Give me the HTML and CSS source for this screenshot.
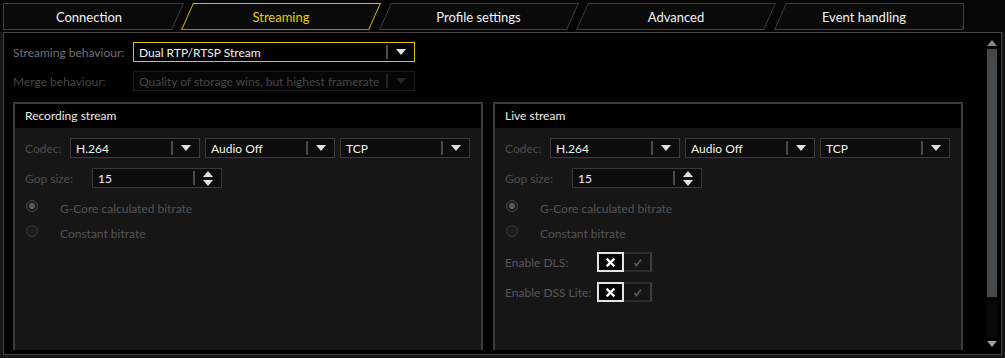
FILE: index.html
```html
<!DOCTYPE html>
<html lang="en">
<head>
  <meta charset="UTF-8" />
  <title>Camera settings - Streaming</title>
  <link rel="stylesheet" href="styles.css">
</head>
<body>
  <div class="topbar">
    <nav class="tabs">
      <div class="tab tab-first">Connection</div>
      <div class="tab active">Streaming</div>
      <div class="tab">Profile settings</div>
      <div class="tab">Advanced</div>
      <div class="tab tab-last">Event handling</div>
    </nav>
  </div>

  <div class="frame">
    <div class="scroll-view">
      <div class="field">
        <label class="field-label">Streaming behaviour:</label>
        <div class="combo combo-wide focused">
          <span class="combo-value">Dual RTP/RTSP Stream</span>
          <span class="combo-sep"></span>
          <span class="combo-btn"><i class="tri-down"></i></span>
        </div>
      </div>
      <div class="field field-last disabled">
        <label class="field-label">Merge behaviour:</label>
        <div class="combo combo-wide">
          <span class="combo-value">Quality of storage wins, but highest framerate</span>
          <span class="combo-sep"></span>
          <span class="combo-btn"><i class="tri-down"></i></span>
        </div>
      </div>

      <div class="groups">
        <section class="group">
          <header class="group-title">Recording stream</header>
          <div class="group-body">
            <div class="row">
              <span class="row-label codec-label">Codec:</span>
              <div class="combo"><span class="combo-value">H.264</span><span class="combo-sep"></span><span class="combo-btn"><i class="tri-down"></i></span></div>
              <div class="combo"><span class="combo-value">Audio Off</span><span class="combo-sep"></span><span class="combo-btn"><i class="tri-down"></i></span></div>
              <div class="combo"><span class="combo-value">TCP</span><span class="combo-sep"></span><span class="combo-btn"><i class="tri-down"></i></span></div>
            </div>
            <div class="row">
              <span class="row-label gop-label">Gop size:</span>
              <div class="spin"><span class="combo-value">15</span><span class="combo-sep"></span><span class="spin-btn"><i class="tri-up"></i><i class="tri-down"></i></span></div>
            </div>
            <div class="radio-row">
              <span class="radio checked"></span><span class="radio-text">G-Core calculated bitrate</span>
            </div>
            <div class="radio-row">
              <span class="radio"></span><span class="radio-text">Constant bitrate</span>
            </div>
          </div>
        </section>

        <section class="group">
          <header class="group-title">Live stream</header>
          <div class="group-body">
            <div class="row">
              <span class="row-label codec-label">Codec:</span>
              <div class="combo"><span class="combo-value">H.264</span><span class="combo-sep"></span><span class="combo-btn"><i class="tri-down"></i></span></div>
              <div class="combo"><span class="combo-value">Audio Off</span><span class="combo-sep"></span><span class="combo-btn"><i class="tri-down"></i></span></div>
              <div class="combo"><span class="combo-value">TCP</span><span class="combo-sep"></span><span class="combo-btn"><i class="tri-down"></i></span></div>
            </div>
            <div class="row">
              <span class="row-label gop-label">Gop size:</span>
              <div class="spin"><span class="combo-value">15</span><span class="combo-sep"></span><span class="spin-btn"><i class="tri-up"></i><i class="tri-down"></i></span></div>
            </div>
            <div class="radio-row">
              <span class="radio checked"></span><span class="radio-text">G-Core calculated bitrate</span>
            </div>
            <div class="radio-row">
              <span class="radio"></span><span class="radio-text">Constant bitrate</span>
            </div>
            <div class="row toggle-row toggle-first">
              <span class="row-label toggle-label">Enable DLS:</span>
              <div class="toggle">
                <span class="toggle-off"><svg width="9" height="9" viewBox="0 0 9 9"><path d="M1.5 1.5 L7.5 7.5 M7.5 1.5 L1.5 7.5" stroke="#fff" stroke-width="2.4" stroke-linecap="square"/></svg></span>
                <span class="toggle-on"><svg width="9" height="9" viewBox="0 0 9 9"><path d="M1.5 5 L3.5 7.5 L8 1.5" fill="none" stroke="#555" stroke-width="1.8"/></svg></span>
              </div>
            </div>
            <div class="row toggle-row">
              <span class="row-label toggle-label">Enable DSS Lite:</span>
              <div class="toggle">
                <span class="toggle-off"><svg width="9" height="9" viewBox="0 0 9 9"><path d="M1.5 1.5 L7.5 7.5 M7.5 1.5 L1.5 7.5" stroke="#fff" stroke-width="2.4" stroke-linecap="square"/></svg></span>
                <span class="toggle-on"><svg width="9" height="9" viewBox="0 0 9 9"><path d="M1.5 5 L3.5 7.5 L8 1.5" fill="none" stroke="#555" stroke-width="1.8"/></svg></span>
              </div>
            </div>
          </div>
        </section>
      </div>
    </div>

    <div class="scrollbar">
      <i class="sb-up"></i>
      <div class="sb-thumb"></div>
      <div class="sb-track"></div>
      <i class="sb-down"></i>
    </div>
  </div>
</body>
</html>
```

FILE: styles.css
```css
body {
  margin: 0;
  width: 1005px;
  height: 358px;
  overflow: hidden;
  background-color: #161616;
  font-family: Lato, "Open Sans", sans-serif;
  font-size: 12px;
  color: #e8e8e8;
}

/* tab strip */
.topbar {
  height: 32px;
  padding-top: 3px;
  box-sizing: border-box;
  background-color: #050505;
}
.tabs {
  display: flex;
  width: 961px;
  height: 27px;
  margin-left: 3px;
  box-sizing: border-box;
  border-left: 1px solid #3e3e3e;
  border-right: 1px solid #3e3e3e;
  overflow: hidden;
}
.tab {
  position: relative;
  z-index: 0;
  flex: none;
  width: 188px;
  height: 27px;
  margin-left: 9.5px;
  box-sizing: border-box;
  display: flex;
  align-items: center;
  justify-content: center;
  font-size: 13px;
  color: #f4f4f4;
}
.tab::before {
  content: "";
  position: absolute;
  inset: 0;
  z-index: -1;
  border: 1px solid #3e3e3e;
  background-color: #0a0a0a;
  transform: skewX(-24deg);
}
.tab-first {
  margin-left: -14.5px;
  padding-left: 11px;
}
.tab-last {
  padding-right: 19px;
}
.tab.active {
  color: #e8d000;
}
.tab.active::before {
  border-color: #d8b800;
  border-bottom-color: #9c8700;
}

/* main frame */
.frame {
  display: flex;
  width: 999px;
  height: 323px;
  margin-left: 3px;
  padding-bottom: 4px;
  box-sizing: border-box;
  border: 1px solid #454545;
  background-color: #000;
}
.scroll-view {
  flex: 1;
  overflow: hidden;
  padding: 9px 0 0 9px;
}

.field {
  display: flex;
  align-items: center;
  height: 20px;
  margin-bottom: 9px;
}
.field-last {
  margin-bottom: 11px;
}
.field-label {
  width: 120px;
  color: #707070;
}
.disabled .field-label {
  color: #454545;
}

/* combo boxes */
.combo,
.spin {
  display: flex;
  align-items: center;
  width: 130px;
  height: 20px;
  box-sizing: border-box;
  border: 1px solid #3a3a3a;
  background-color: #0c0c0c;
  color: #f2f2f2;
}
.combo + .combo {
  margin-left: 5px;
}
.combo-wide {
  width: 282px;
  background-color: #000;
}
.combo.focused {
  border-color: #e6c200;
}
.combo-value {
  flex: 1;
  padding-left: 5px;
  white-space: nowrap;
  overflow: hidden;
}
.combo-sep {
  width: 2px;
  height: 14px;
  background-color: #4a4a4a;
}
.combo-btn,
.spin-btn {
  width: 26px;
  display: flex;
  flex-direction: column;
  align-items: center;
  justify-content: center;
}
.spin-btn {
  gap: 3px;
  height: 18px;
}
.tri-down,
.tri-up {
  display: block;
  width: 0;
  height: 0;
  border-left: 5px solid transparent;
  border-right: 5px solid transparent;
}
.tri-down {
  border-top: 6px solid #e2e2e2;
}
.tri-up {
  border-bottom: 6px solid #e2e2e2;
}
.disabled .combo {
  border-color: #1c1c1c;
  background-color: #050505;
  color: #474747;
}
.disabled .combo-sep {
  background-color: #222;
}
.disabled .tri-down {
  border-top-color: #262626;
}

/* group boxes */
.groups {
  display: flex;
  gap: 10px;
}
.group {
  width: 470px;
  height: 300px;
  box-sizing: border-box;
  border: 2px solid #3b3e41;
  background-color: #161616;
}
.group-title {
  height: 24px;
  line-height: 24px;
  padding-left: 10px;
  background-color: #000;
  color: #ececec;
}
.group-body {
  padding: 10px 0 0 10px;
}

.row {
  display: flex;
  align-items: center;
  height: 20px;
  margin-bottom: 10px;
}
.row-label {
  color: #4e4e4e;
}
.codec-label {
  width: 45px;
}
.gop-label {
  width: 67px;
}
.toggle-label {
  width: 92px;
  color: #585858;
}
.toggle-first {
  margin-top: 13px;
}

/* radios */
.radio-row {
  display: flex;
  align-items: center;
  height: 16px;
  margin-bottom: 9px;
}
.radio {
  width: 12px;
  height: 12px;
  margin-left: 1px;
  box-sizing: border-box;
  border: 1px solid #3a3a3a;
  border-radius: 50%;
  background-color: #1c1c1c;
  display: flex;
  align-items: center;
  justify-content: center;
}
.radio.checked {
  border-color: #464646;
}
.radio.checked::after {
  content: "";
  width: 6px;
  height: 6px;
  border-radius: 50%;
  background-color: #5c5c5c;
}
.radio-text {
  margin-left: 22px;
  padding-top: 4px;
  color: #545454;
}

/* toggles */
.toggle {
  display: flex;
  height: 20px;
}
.toggle-off,
.toggle-on {
  display: flex;
  align-items: center;
  justify-content: center;
  box-sizing: border-box;
  height: 20px;
}
.toggle-off {
  width: 27px;
  border: 2px solid #e4e4e4;
  background-color: #050505;
}
.toggle-on {
  width: 28px;
  border: 2px solid #2c2c2c;
  border-left: none;
  border-right-color: #404040;
  background-color: #141414;
}

/* scrollbar */
.scrollbar {
  width: 17px;
  display: flex;
  flex-direction: column;
  align-items: center;
  padding: 7px 2px 3px 0;
  box-sizing: border-box;
}
.sb-up,
.sb-down {
  width: 0;
  height: 0;
  border-left: 5px solid transparent;
  border-right: 5px solid transparent;
}
.sb-up {
  border-bottom: 6px solid #8a8a8a;
}
.sb-down {
  border-top: 6px solid #a0a0a0;
  margin-top: 3px;
}
.sb-thumb {
  width: 10px;
  height: 248px;
  margin-top: 3px;
  background-color: #46494c;
}
.sb-track {
  flex: 1;
  width: 10px;
  background-color: #080808;
}
```
